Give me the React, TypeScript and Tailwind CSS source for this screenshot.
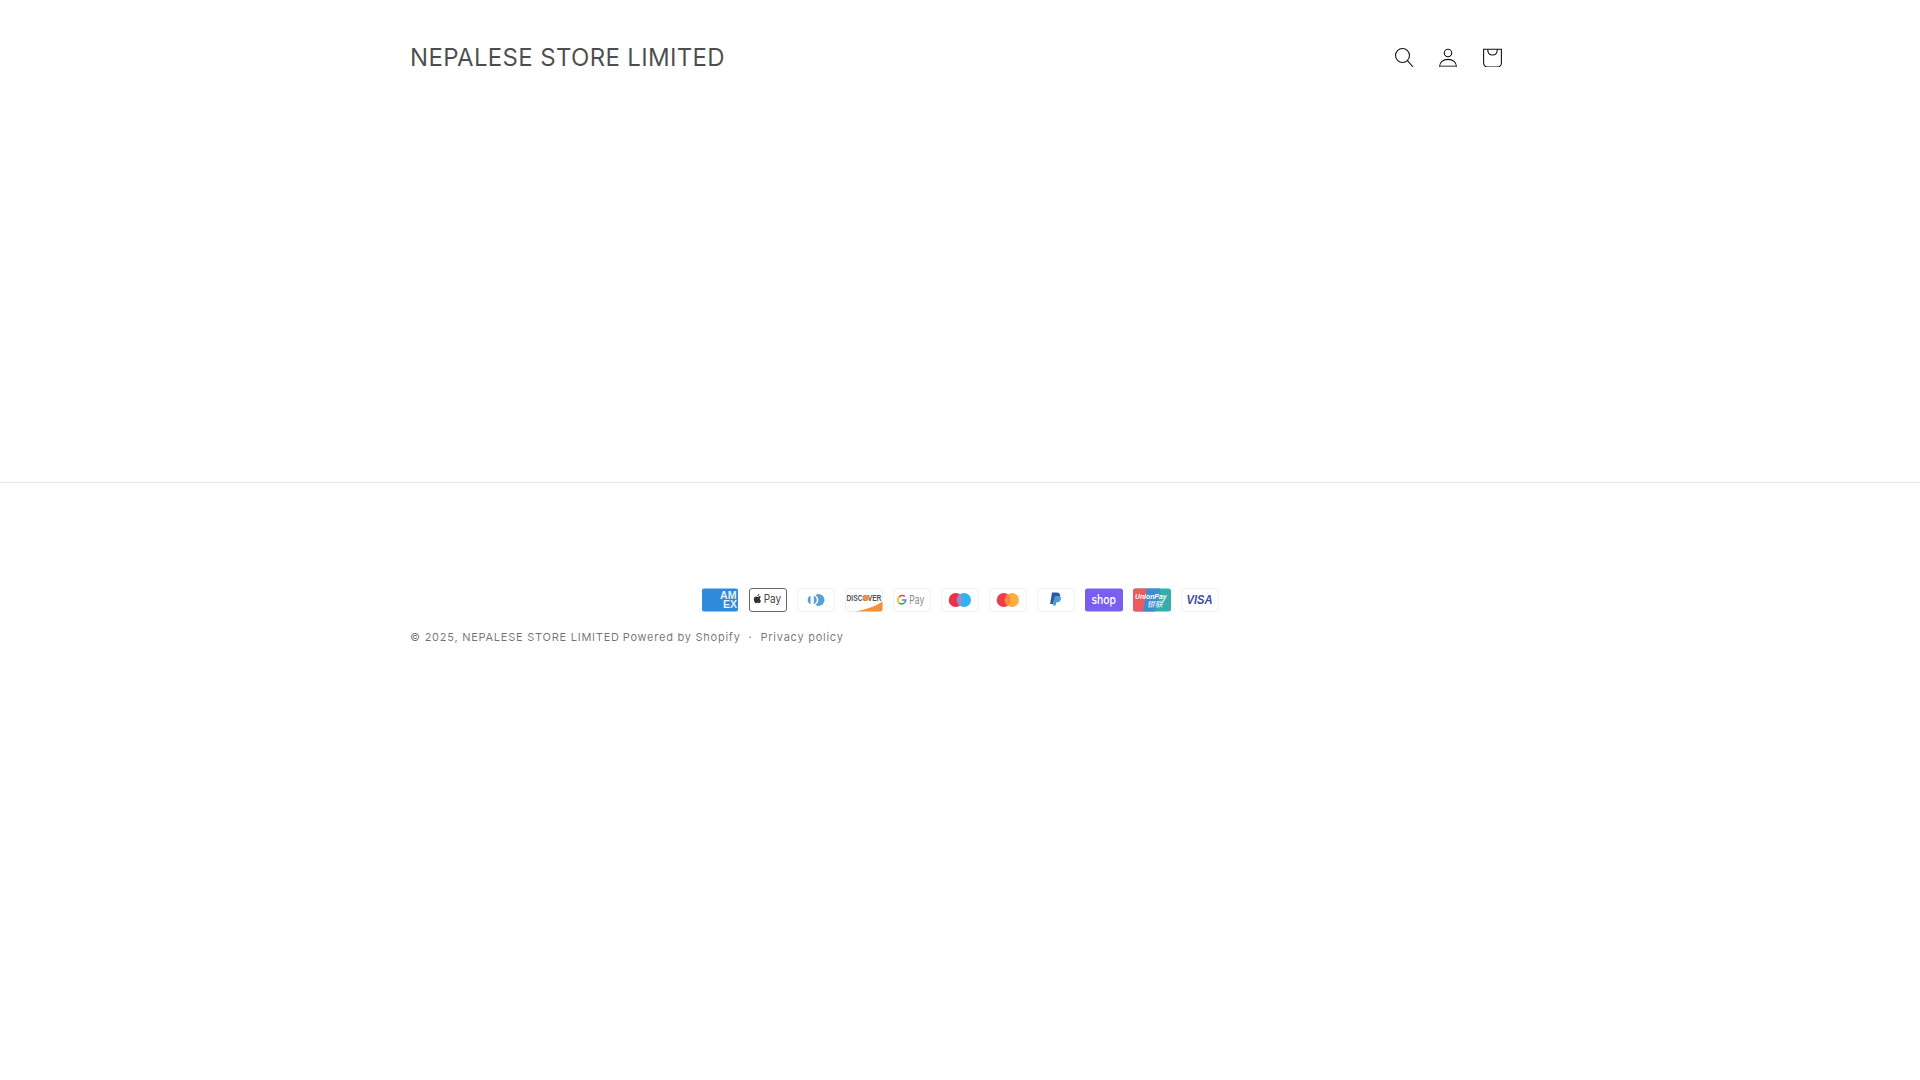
import React from "react";

function Card({ children }: { children?: React.ReactNode }) {
  return (
    <svg viewBox="0 0 38 24" width="38" height="24" className="block">
      <rect x="0.5" y="0.5" width="37" height="23" rx="2.5" fill="#fff" stroke="#f0f0f0" />
      {children}
    </svg>
  );
}

export default function App() {
  return (
    <div className="min-h-screen bg-white font-['Inter',sans-serif] text-[#121212bf] antialiased">
      <header className="mx-auto flex h-[114px] w-[1200px] items-center justify-between pl-[50px] pr-[46px]">
        <span className="text-[24px] leading-[29px] tracking-[0.33px]">NEPALESE STORE LIMITED</span>
        <div className="flex text-[#121212]">
          <div className="flex h-[44px] w-[44px] items-center justify-center">
            <svg width="20" height="20" viewBox="0 0 20 20" fill="none" stroke="currentColor" strokeWidth="1.1"><circle cx="8.500" cy="8.500" r="7" /><path d="M13.500 13.700L19 20" /></svg>
          </div>
          <div className="flex h-[44px] w-[44px] items-center justify-center">
            <svg width="20" height="20" viewBox="0 0 20 20" fill="none" stroke="currentColor" strokeWidth="1.1"><circle cx="10" cy="6" r="3.700" /><path d="M1.600 19.400c0-4 3.500-7 8.400-7s8.400 3 8.400 7z" /><path d="M1.500 19.600h17" stroke="#777" strokeWidth="1.500" /></svg>
          </div>
          <div className="flex h-[44px] w-[44px] items-center justify-center">
            <svg width="20" height="20" viewBox="0 0 20 20" fill="none" stroke="currentColor" strokeWidth="1.1"><path d="M1.600 2.200h17.800v13.500c0 2.500-1.700 4.300-4 4.300H5.600c-2.300 0-4-1.800-4-4.300z" /><path d="M5.700 2.200c0 3.500 2 5.800 4.800 5.800s4.800-2.300 4.800-5.800" /><path d="M4 20h13" stroke="#777" strokeWidth="1" /></svg>
          </div>
        </div>
      </header>
      <div className="h-[368px]" />
      <footer className="border-t border-[#1212121a]">
        <div className="mx-auto w-[1200px] px-[50px] pt-[105px]">
          <div className="flex justify-center gap-[10px]">
            {/* American Express */}
            <svg viewBox="0 0 38 24" width="38" height="24"><rect x="1" y="0.5" width="36" height="23" rx="2" fill="#2e8bdc" /><text x="19" y="11" fontSize="10" fontWeight="700" fill="#e6f2fc" fontFamily="Liberation Sans" textLength="16.500" lengthAdjust="spacingAndGlyphs">AM</text><text x="22" y="20" fontSize="10" fontWeight="700" fill="#e6f2fc" fontFamily="Liberation Sans" textLength="14" lengthAdjust="spacingAndGlyphs">EX</text></svg>
            {/* Apple Pay */}
            <svg viewBox="0 0 38 24" width="38" height="24"><rect x="0.5" y="0.5" width="37" height="23" rx="2.5" fill="#fff" stroke="#666" /><path d="M9.600 7.600c.4-.5.6-1 .6-1.600-.6 0-1.100.4-1.400.8-.3.400-.5.900-.4 1.400.500 0 .900-.2 1.200-.6zM10.200 8.500c-.8 0-1.200.5-1.700.5s-1-.5-1.700-.5c-1 0-2 1-2 2.700 0 2 1.400 4 2.200 4 .5 0 .8-.4 1.500-.4s.9.400 1.500.4c.8 0 1.700-1.500 2-2.500-1.500-.6-1.600-2.900 0-3.600-.4-.7-1.200-1.100-1.800-1.100z" fill="#333" /><text x="14.700" y="15.300" fontSize="11.500" fill="#444" fontFamily="Inter" textLength="17.500" lengthAdjust="spacingAndGlyphs">Pay</text></svg>
            {/* Diners Club */}
            <Card><circle cx="21.500" cy="12" r="6" fill="#5b9fd9" /><circle cx="15.500" cy="12" r="5.800" fill="#fff" /><path d="M13.600 7.800a4.500 4.500 0 0 0 0 8.400z" fill="#5b9fd9" /><path d="M16.800 7.800a4.500 4.500 0 0 1 0 8.400z" fill="#5b9fd9" /></Card>
            {/* Discover */}
            <Card><text x="1.500" y="9.900" transform="scale(1 1.310)" fontSize="6.700" fontWeight="700" fill="#555" fontFamily="Liberation Sans">DISCOVER</text><circle cx="21" cy="10" r="3" fill="#f4913a" /><path d="M10 23.500C20 22 30 18.500 37.500 13.500V21a2.500 2.500 0 0 1-2.500 2.500z" fill="#f4913a" /></Card>
            {/* Google Pay */}
            <Card>
              <g fill="none" strokeWidth="1.600">
                <path d="M11.800 8.500a3.800 3.800 0 0 0-5.600.5" stroke="#ea4335" />
                <path d="M6.200 9a3.800 3.800 0 0 0 0 6" stroke="#fbbc05" />
                <path d="M6.200 15a3.800 3.800 0 0 0 5.600-.6" stroke="#34a853" />
                <path d="M11.800 14.400a3.800 3.800 0 0 0 .9-2.400H9" stroke="#4285f4" />
              </g>
              <text x="16.300" y="15.800" fontSize="11.500" fill="#8a8a8a" fontFamily="Inter" textLength="15" lengthAdjust="spacingAndGlyphs">Pay</text>
            </Card>
            {/* Maestro */}
            <Card><circle cx="14.700" cy="12" r="7" fill="#ee3045" /><circle cx="23" cy="12" r="7" fill="#2fb4ee" /><path d="M18.850 6.150a7 7 0 0 1 0 11.700a7 7 0 0 1 0-11.700z" fill="#8f8fd8" /></Card>
            {/* Mastercard */}
            <Card><circle cx="14.700" cy="12" r="7" fill="#ee3c4a" /><circle cx="23" cy="12" r="7" fill="#fbb040" /><path d="M18.850 6.150a7 7 0 0 1 0 11.700a7 7 0 0 1 0-11.700z" fill="#ff8a3c" /></Card>
            {/* PayPal */}
            <Card><path d="M15 4.500h4.500c2.500 0 4 1.200 3.600 3.500-.4 2.500-2.200 3.800-4.600 3.800H17l-.7 4.200h-3.200z" fill="#2b5a9e" /><path d="M18 8h3.500c2 0 2.800 1.200 2.400 3.100-.4 2.200-1.800 3.200-3.600 3.200h-1l-.6 3.200h-2.800z" fill="#4a9bd8" /></Card>
            {/* Shop Pay */}
            <svg viewBox="0 0 38 24" width="38" height="24"><rect y="0.500" width="38" height="23" rx="2.500" fill="#7a5ef0" /><text x="6.500" y="15.500" fontSize="12.500" fontWeight="500" fill="#fff" fontFamily="Inter" textLength="24.500" lengthAdjust="spacingAndGlyphs">shop</text></svg>
            {/* UnionPay */}
            <svg viewBox="0 0 38 24" width="38" height="24"><rect y="0.500" width="38" height="23" rx="2.500" fill="#35adad" /><path d="M2.500.500H14l-4 23H2.500A2.500 2.500 0 0 1 0 21V3A2.500 2.500 0 0 1 2.500.500z" fill="#ef5a5f" /><path d="M14 .500h13l-5 23H10z" fill="#3f8ccf" /><text x="2" y="10.700" fontSize="7" fontStyle="italic" fontWeight="700" fill="#fff" fontFamily="Liberation Sans" textLength="31.500" lengthAdjust="spacingAndGlyphs">UnionPay</text><text x="13.700" y="18.500" fontSize="7.500" fontStyle="italic" fontWeight="500" fill="#ffffffcc" fontFamily="Noto Sans CJK SC" textLength="16" lengthAdjust="spacingAndGlyphs">银联</text></svg>
            {/* Visa */}
            <Card><text x="5.500" y="16" fontSize="12" fontStyle="italic" fontWeight="700" fill="#3f4d9e" fontFamily="Liberation Sans" textLength="26" lengthAdjust="spacingAndGlyphs">VISA</text></Card>
          </div>
          <div className="mt-[18px] flex text-[11px] leading-[14px] tracking-[0.75px] text-[#12121299]">
            <span>© 2025, NEPALESE STORE LIMITED</span>
            <span className="ml-[3px]">Powered by Shopify</span>
            <span className="ml-[8px]">·</span>
            <span className="ml-[8px]">Privacy policy</span>
          </div>
        </div>
      </footer>
    </div>
  );
}
